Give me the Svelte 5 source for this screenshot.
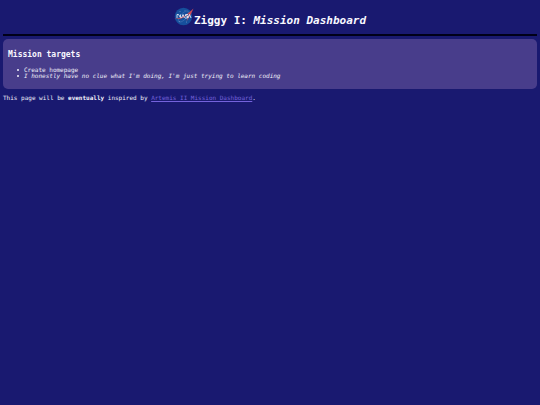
<script>
	let targets = [
		{ text: "Create homepage", note: false },
		{
			text: "I honestly have no clue what I'm doing, I'm just trying to learn coding",
			note: true,
		},
	];
</script>

<svelte:head>
	<title>Ziggy I: Mission Dashboard</title>
</svelte:head>

<header>
	<svg class="logo" viewBox="0 0 40 38" role="img" aria-label="NASA logo">
		<circle cx="19" cy="19" r="17.5" fill="#164f9c" />
		<g fill="#a9c0e2">
			<circle cx="12" cy="9" r="0.8" />
			<circle cx="22" cy="7" r="0.7" />
			<circle cx="11" cy="29" r="0.8" />
			<circle cx="25" cy="30" r="0.8" />
		</g>
		<ellipse
			cx="19"
			cy="19"
			rx="14"
			ry="6"
			transform="rotate(-48 19 19)"
			fill="none"
			stroke="#5f86c2"
			stroke-width="0.8"
		/>
		<path
			d="M0 23 C12 24 25 17 39 3 L33 16 L25 29 L30 13 C21 22 11 26 0 23Z"
			fill="#d34b55"
		/>
		<path
			d="M6 22 V15 H9 L13 21 V15 M15 22 L18 15 L21 22 M28 15 H23 V18 H27 V22 H22 M28 22 L31 15 L34 22"
			fill="none"
			stroke="#e8effa"
			stroke-width="1.7"
		/>
	</svg>
	<h1>Ziggy I: <em>Mission Dashboard</em></h1>
</header>

<hr />

<main>
	<section class="targets">
		<h2>Mission targets</h2>
		<ul>
			{#each targets as target}
				<li class:note={target.note}>{target.text}</li>
			{/each}
		</ul>
	</section>

	<p>
		This page will be <strong>eventually</strong> inspired by
		<a href="#artemis">Artemis II Mission Dashboard</a>.
	</p>
</main>

<style>
	:global(body) {
		background: #191970;
		color: #f0f0fa;
		font-family: "DejaVu Sans Mono", monospace;
		font-size: 6px;
		line-height: 6px;
	}

	:global(#app) {
		padding: 7px 3px 3px;
	}

	header {
		display: flex;
		justify-content: center;
		align-items: flex-start;
	}

	.logo {
		width: 20px;
		height: 19px;
		flex: none;
	}

	h1 {
		margin: 7px 0 0;
		font-size: 11px;
		line-height: 13px;
		color: #f8f8ff;
	}

	hr {
		height: 2px;
		margin: 7px 0 3px;
		border: none;
		background: #000018;
	}

	.targets {
		padding: 10px 5px;
		border-radius: 5px;
		background: #483d8b;
	}

	h2 {
		margin: 0 0 7px;
		font-size: 8px;
		line-height: 11px;
		color: #f8f8ff;
	}

	ul {
		margin: 0;
		padding-left: 16px;
		list-style: none;
	}

	li::before {
		content: "";
		float: left;
		width: 2px;
		height: 2px;
		margin: 2px 0 0 -7px;
		border-radius: 50%;
		background: currentColor;
	}

	.note {
		font-style: italic;
	}

	p {
		margin: 6px 0 0;
	}

	a {
		color: #7462dc;
	}
</style>
